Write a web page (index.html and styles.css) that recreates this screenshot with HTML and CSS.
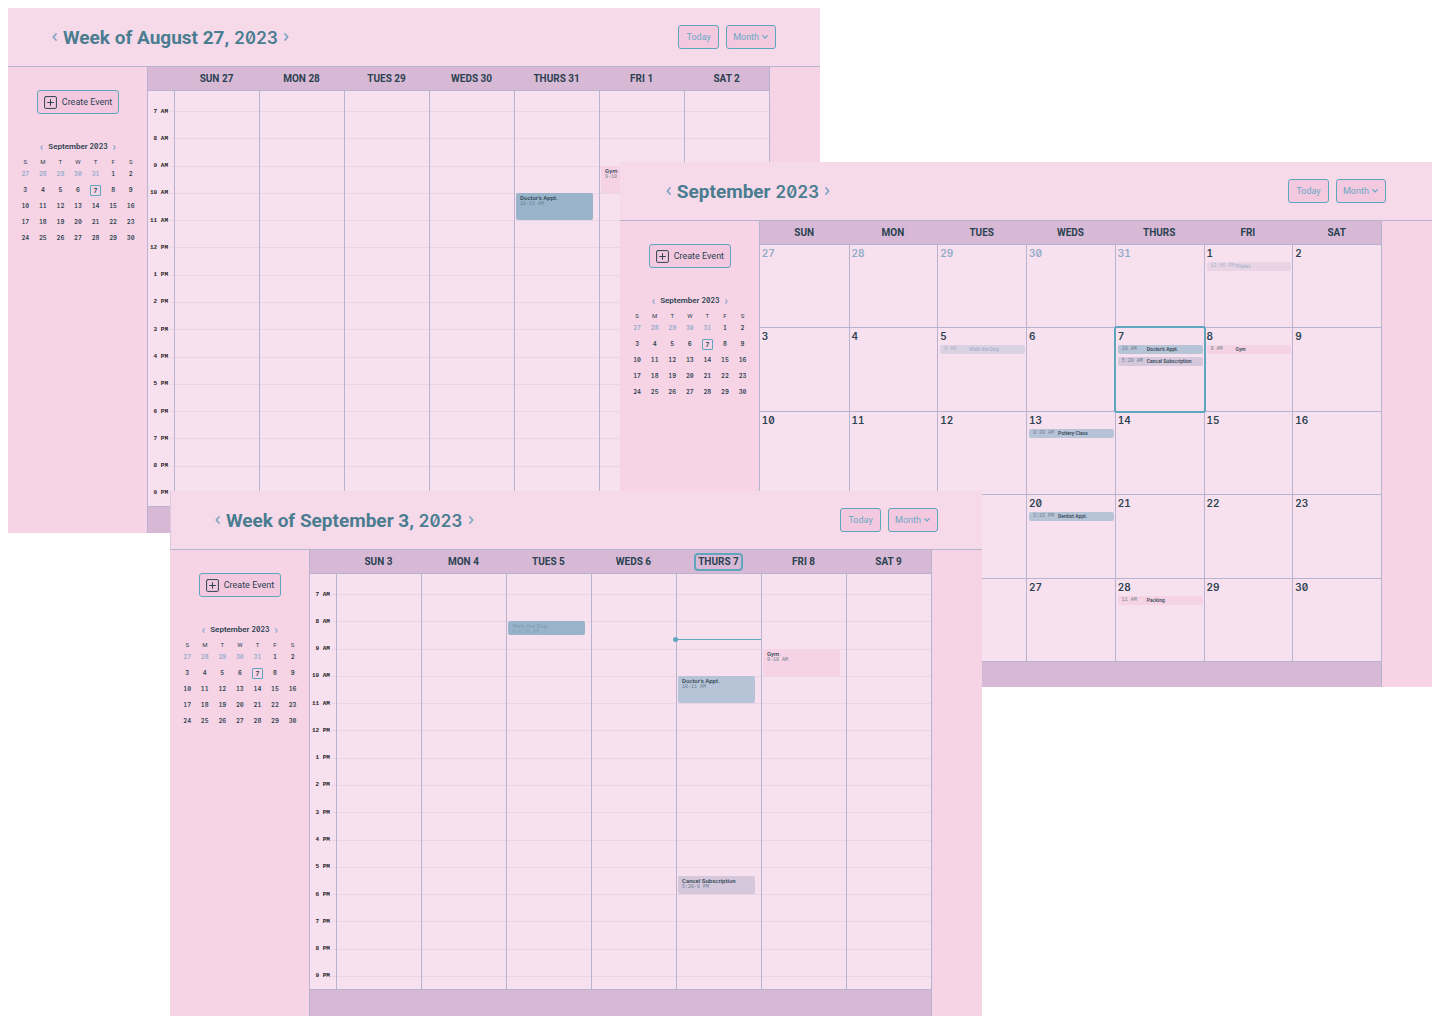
FILE: index.html
```html
<!DOCTYPE html>
<html lang="en">
<head>
<meta charset="utf-8">
<meta name="viewport" content="width=device-width, initial-scale=1">
<title>Calendar</title>
<link rel="stylesheet" href="styles.css">
</head>
<body>
<svg class="defs" aria-hidden="true">
  <symbol id="prev" viewBox="0 0 5 8"><path d="M4 1 L1.3 4 L4 7"/></symbol>
  <symbol id="next" viewBox="0 0 5 8"><path d="M1 1 L3.7 4 L1 7"/></symbol>
  <symbol id="down" viewBox="0 0 6 4"><path d="M0.7 0.7 L3 3 L5.3 0.7"/></symbol>
  <symbol id="plus" viewBox="0 0 13 13"><rect x="0.6" y="0.6" width="11.8" height="11.8" rx="1"/><path d="M6.5 3.6 V9.4 M3.6 6.5 H9.4"/></symbol>
</svg>
<div class="canvas">

<section class="window window-august">
  <header class="topbar">
    <div class="period">
      <button class="nav" aria-label="Previous week"><svg><use href="#prev"/></svg></button>
      <h1>Week of August 27, <span class="num">2023</span></h1>
      <button class="nav" aria-label="Next week"><svg><use href="#next"/></svg></button>
    </div>
    <div class="controls">
      <button class="today-button">Today</button>
      <div class="view"><select aria-label="View"><option>Month</option></select><svg><use href="#down"/></svg></div>
    </div>
  </header>
  <div class="content">
    <aside class="sidebar">
      <button class="create"><svg><use href="#plus"/></svg>Create Event</button>
      <div class="mini-head">
        <button class="nav small" aria-label="Previous month"><svg><use href="#prev"/></svg></button>
        <h2>September <span class="num">2023</span></h2>
        <button class="nav small" aria-label="Next month"><svg><use href="#next"/></svg></button>
      </div>
      <table class="mini">
        <thead><tr><th>S</th><th>M</th><th>T</th><th>W</th><th>T</th><th>F</th><th>S</th></tr></thead>
        <tbody>
          <tr><td class="out">27</td><td class="out">28</td><td class="out">29</td><td class="out">30</td><td class="out">31</td><td>1</td><td>2</td></tr>
          <tr><td>3</td><td>4</td><td>5</td><td>6</td><td><span class="now-day">7</span></td><td>8</td><td>9</td></tr>
          <tr><td>10</td><td>11</td><td>12</td><td>13</td><td>14</td><td>15</td><td>16</td></tr>
          <tr><td>17</td><td>18</td><td>19</td><td>20</td><td>21</td><td>22</td><td>23</td></tr>
          <tr><td>24</td><td>25</td><td>26</td><td>27</td><td>28</td><td>29</td><td>30</td></tr>
        </tbody>
      </table>
    </aside>
    <main class="board week">
      <div class="day-names"><span></span><h3>SUN 27</h3><h3>MON 28</h3><h3>TUES 29</h3><h3>WEDS 30</h3><h3>THURS 31</h3><h3>FRI 1</h3><h3>SAT 2</h3></div>
      <div class="schedule">
        <ol class="hours"><li>7 AM</li><li>8 AM</li><li>9 AM</li><li>10 AM</li><li>11 AM</li><li>12 PM</li><li>1 PM</li><li>2 PM</li><li>3 PM</li><li>4 PM</li><li>5 PM</li><li>6 PM</li><li>7 PM</li><li>8 PM</li><li>9 PM</li></ol>
        <div class="days">
          <div class="day"></div><div class="day"></div><div class="day"></div><div class="day"></div>
          <div class="day"><article class="slot steel" style="grid-row: 19 / span 6"><h4>Doctor's Appt.</h4><p>10-11 AM</p></article></div>
          <div class="day"><article class="slot pink" style="grid-row: 13 / span 6"><h4>Gym</h4><p>9-10 AM</p></article></div>
          <div class="day"></div>
        </div>
      </div>
      <div class="footer-bar"></div>
    </main>
  </div>
</section>

<section class="window window-month">
  <header class="topbar">
    <div class="period">
      <button class="nav" aria-label="Previous month"><svg><use href="#prev"/></svg></button>
      <h1>September <span class="num">2023</span></h1>
      <button class="nav" aria-label="Next month"><svg><use href="#next"/></svg></button>
    </div>
    <div class="controls">
      <button class="today-button">Today</button>
      <div class="view"><select aria-label="View"><option>Month</option></select><svg><use href="#down"/></svg></div>
    </div>
  </header>
  <div class="content">
    <aside class="sidebar">
      <button class="create"><svg><use href="#plus"/></svg>Create Event</button>
      <div class="mini-head">
        <button class="nav small" aria-label="Previous month"><svg><use href="#prev"/></svg></button>
        <h2>September <span class="num">2023</span></h2>
        <button class="nav small" aria-label="Next month"><svg><use href="#next"/></svg></button>
      </div>
      <table class="mini">
        <thead><tr><th>S</th><th>M</th><th>T</th><th>W</th><th>T</th><th>F</th><th>S</th></tr></thead>
        <tbody>
          <tr><td class="out">27</td><td class="out">28</td><td class="out">29</td><td class="out">30</td><td class="out">31</td><td>1</td><td>2</td></tr>
          <tr><td>3</td><td>4</td><td>5</td><td>6</td><td><span class="now-day">7</span></td><td>8</td><td>9</td></tr>
          <tr><td>10</td><td>11</td><td>12</td><td>13</td><td>14</td><td>15</td><td>16</td></tr>
          <tr><td>17</td><td>18</td><td>19</td><td>20</td><td>21</td><td>22</td><td>23</td></tr>
          <tr><td>24</td><td>25</td><td>26</td><td>27</td><td>28</td><td>29</td><td>30</td></tr>
        </tbody>
      </table>
    </aside>
    <main class="board">
      <table class="month">
        <thead><tr><th>SUN</th><th>MON</th><th>TUES</th><th>WEDS</th><th>THURS</th><th>FRI</th><th>SAT</th></tr></thead>
        <tbody>
          <tr>
            <td class="out"><b>27</b></td><td class="out"><b>28</b></td><td class="out"><b>29</b></td><td class="out"><b>30</b></td><td class="out"><b>31</b></td>
            <td><b>1</b><p class="entry mauve past"><time>12:45 PM</time>Pilates</p></td>
            <td><b>2</b></td>
          </tr>
          <tr>
            <td><b>3</b></td><td><b>4</b></td>
            <td><b>5</b><p class="entry grey past"><time>8 AM</time>Walk the Dog</p></td>
            <td><b>6</b></td>
            <td class="current"><b>7</b><p class="entry blue"><time>10 AM</time>Doctor's Appt.</p><p class="entry lilac"><time>5:20 AM</time>Cancel Subscription</p></td>
            <td><b>8</b><p class="entry pink"><time>9 AM</time>Gym</p></td>
            <td><b>9</b></td>
          </tr>
          <tr>
            <td><b>10</b></td><td><b>11</b></td><td><b>12</b></td>
            <td><b>13</b><p class="entry blue"><time>9:30 AM</time>Pottery Class</p></td>
            <td><b>14</b></td><td><b>15</b></td><td><b>16</b></td>
          </tr>
          <tr>
            <td><b>17</b></td><td><b>18</b></td><td><b>19</b></td>
            <td><b>20</b><p class="entry blue"><time>2:15 PM</time>Dentist Appt.</p></td>
            <td><b>21</b></td><td><b>22</b></td><td><b>23</b></td>
          </tr>
          <tr>
            <td><b>24</b></td><td><b>25</b></td><td><b>26</b></td><td><b>27</b></td>
            <td><b>28</b><p class="entry pink"><time>11 AM</time>Packing</p></td>
            <td><b>29</b></td><td><b>30</b></td>
          </tr>
        </tbody>
      </table>
      <div class="footer-bar"></div>
    </main>
  </div>
</section>

<section class="window window-september">
  <header class="topbar">
    <div class="period">
      <button class="nav" aria-label="Previous week"><svg><use href="#prev"/></svg></button>
      <h1>Week of September 3, <span class="num">2023</span></h1>
      <button class="nav" aria-label="Next week"><svg><use href="#next"/></svg></button>
    </div>
    <div class="controls">
      <button class="today-button">Today</button>
      <div class="view"><select aria-label="View"><option>Month</option></select><svg><use href="#down"/></svg></div>
    </div>
  </header>
  <div class="content">
    <aside class="sidebar">
      <button class="create"><svg><use href="#plus"/></svg>Create Event</button>
      <div class="mini-head">
        <button class="nav small" aria-label="Previous month"><svg><use href="#prev"/></svg></button>
        <h2>September <span class="num">2023</span></h2>
        <button class="nav small" aria-label="Next month"><svg><use href="#next"/></svg></button>
      </div>
      <table class="mini">
        <thead><tr><th>S</th><th>M</th><th>T</th><th>W</th><th>T</th><th>F</th><th>S</th></tr></thead>
        <tbody>
          <tr><td class="out">27</td><td class="out">28</td><td class="out">29</td><td class="out">30</td><td class="out">31</td><td>1</td><td>2</td></tr>
          <tr><td>3</td><td>4</td><td>5</td><td>6</td><td><span class="now-day">7</span></td><td>8</td><td>9</td></tr>
          <tr><td>10</td><td>11</td><td>12</td><td>13</td><td>14</td><td>15</td><td>16</td></tr>
          <tr><td>17</td><td>18</td><td>19</td><td>20</td><td>21</td><td>22</td><td>23</td></tr>
          <tr><td>24</td><td>25</td><td>26</td><td>27</td><td>28</td><td>29</td><td>30</td></tr>
        </tbody>
      </table>
    </aside>
    <main class="board week">
      <div class="day-names"><span></span><h3>SUN 3</h3><h3>MON 4</h3><h3>TUES 5</h3><h3>WEDS 6</h3><h3 class="current">THURS 7</h3><h3>FRI 8</h3><h3>SAT 9</h3></div>
      <div class="schedule">
        <ol class="hours"><li>7 AM</li><li>8 AM</li><li>9 AM</li><li>10 AM</li><li>11 AM</li><li>12 PM</li><li>1 PM</li><li>2 PM</li><li>3 PM</li><li>4 PM</li><li>5 PM</li><li>6 PM</li><li>7 PM</li><li>8 PM</li><li>9 PM</li></ol>
        <div class="days">
          <div class="day"></div><div class="day"></div>
          <div class="day"><article class="slot steel past" style="grid-row: 7 / span 3"><h4>Walk the Dog</h4><p>8-8:30 AM</p></article></div>
          <div class="day"></div>
          <div class="day">
            <div class="now-line" style="grid-row: 11"></div>
            <article class="slot blue" style="grid-row: 19 / span 6"><h4>Doctor's Appt.</h4><p>10-11 AM</p></article>
            <article class="slot lilac" style="grid-row: 63 / span 4"><h4>Cancel Subscription</h4><p>5:20-6 PM</p></article>
          </div>
          <div class="day"><article class="slot pink" style="grid-row: 13 / span 6"><h4>Gym</h4><p>9-10 AM</p></article></div>
          <div class="day"></div>
        </div>
      </div>
      <div class="footer-bar"></div>
    </main>
  </div>
</section>

</div>
</body>
</html>
```
FILE: styles.css
```css
:root {
  --line: #b9b3d2;
  --teal: #5fa6bd;
  --title: #4a7d90;
  --ink: #2c4250;
  --muted: #91abca;
  --mono: "Liberation Mono", monospace;
}

* { box-sizing: border-box; }

body {
  margin: 0;
  background: #fff;
  color: var(--ink);
  font-family: Roboto, sans-serif;
}

h1, h2, h3, h4, p, ol { margin: 0; padding: 0; }

button, select {
  margin: 0;
  padding: 0;
  border: 0;
  background: none;
  color: inherit;
  font: inherit;
}

svg {
  fill: none;
  stroke: currentColor;
  stroke-linecap: round;
  stroke-linejoin: round;
}

.defs { position: absolute; width: 0; height: 0; }

.num {
  font-family: Inter, sans-serif;
  font-feature-settings: "tnum", "zero";
}

/* Overlapping windows */
.canvas {
  position: relative;
  min-height: 1024px;
}

.window {
  position: absolute;
  display: flex;
  flex-direction: column;
  width: 56.4%;
  min-height: 525px;
  background: #f6d4e5;
}

.window-august { top: 8px; left: 8px; }
.window-month { top: 162px; right: 8px; }
.window-september { top: 491px; left: 11.8%; }

.topbar {
  display: flex;
  align-items: center;
  justify-content: space-between;
  height: 59px;
  padding: 0 44px;
  border-bottom: 1px solid var(--line);
  background: #f7daea;
}

.window-month .topbar { padding: 0 46px; }
.window-september .topbar { border-left: 1px solid #dcc8e0; }

.period { display: flex; align-items: center; gap: 6px; }

h1 {
  padding-top: 2px;
  color: var(--title);
  font-size: 19px;
  line-height: 24px;
  font-weight: 700;
}

h1 .num { font-size: 17px; font-weight: 600; }

.nav { display: flex; color: #7fa6c6; }
.nav svg { width: 5px; height: 8px; stroke-width: 1.8; }
.nav.small svg { width: 3px; height: 5px; }

.controls { display: flex; gap: 7px; color: #6ba8c4; font-size: 9px; }

.today-button, .view select, .create {
  height: 24px;
  border: 1px solid var(--teal);
  border-radius: 3px;
  background: #f3c9e0;
}

.today-button { width: 41px; }

.view { position: relative; }
.view select { width: 50px; padding-left: 6px; appearance: none; }
.view svg {
  position: absolute;
  top: 10px;
  right: 8px;
  width: 6px;
  height: 4px;
  stroke-width: 1.2;
  pointer-events: none;
}

.content { flex: 1; display: flex; padding-right: 50px; }

/* Sidebar */
.sidebar {
  flex: none;
  display: flex;
  flex-direction: column;
  align-items: center;
  width: 139px;
  padding: 23px 0 0 1px;
}

.create {
  display: flex;
  align-items: center;
  gap: 5px;
  padding: 0 6px;
  font-size: 9px;
}
.create svg { width: 13px; height: 13px; }

.mini-head {
  display: flex;
  align-items: center;
  gap: 5px;
  margin: 28px 0 6px;
}

h2 { font-size: 8px; line-height: 10px; font-weight: 600; }
h2 .num { font-size: 7px; }

.mini {
  width: 123px;
  table-layout: fixed;
  border-collapse: collapse;
  font-size: 6px;
  text-align: center;
}
.mini th { height: 8px; padding: 0; font-weight: 400; line-height: 8px; }
.mini td {
  height: 16px;
  padding: 0;
  font: 600 6px/12px Inter, sans-serif;
  font-feature-settings: "tnum", "zero";
}
.mini .out { color: var(--muted); }
.now-day {
  display: block;
  width: 11px;
  margin: auto;
  border: 1px solid var(--teal);
  border-radius: 1px;
  line-height: 9px;
}

/* Main board */
.board {
  flex: 1;
  display: grid;
  grid-template-rows: 1fr 25px;
  border: solid var(--line);
  border-width: 0 1px;
  background: #f8e1ee;
}
.week { grid-template-rows: 24px 1fr 26px; }

.footer-bar { background: #d7b9d6; }

h3, .month th { font-size: 10px; line-height: 12px; font-weight: 700; }

.day-names {
  display: grid;
  grid-template-columns: 26px repeat(7, 1fr);
  place-items: center;
  border-bottom: 1px solid var(--line);
  background: #d7b9d6;
}
h3.current {
  padding: 1px 2px;
  border: 2px solid var(--teal);
  border-radius: 4px;
}

.schedule { display: grid; border-bottom: 1px solid var(--line); }
.hours, .days { grid-area: 1 / 1; }

.hours {
  display: flex;
  flex-direction: column;
  padding: 20px 0 13px;
  list-style: none;
}
.hours li {
  flex: 1;
  display: grid;
  grid-template-columns: 20px 1fr;
  grid-template-rows: 1px;
  column-gap: 2px;
  align-items: center;
  min-height: 0;
  color: #1c1a22;
  font: 700 6px/8px var(--mono);
  text-align: right;
  white-space: nowrap;
}
.hours li:last-child { flex: none; height: 0; }
.hours li::before { content: ""; grid-area: 1 / 2; height: 1px; background: #ead5e6; }

.days { display: grid; grid-template-columns: repeat(7, 1fr); padding-left: 26px; }
/* One grid row stands for ten minutes, from 7 AM to 9 PM */
.day {
  display: grid;
  grid-template-rows: repeat(84, minmax(0, 1fr));
  padding: 20px 0 13px;
  border-left: 1px solid var(--line);
}

.slot {
  contain: size;
  margin: 0 6px 0 1px;
  padding: 1px 4px;
  border-radius: 2px;
  overflow: hidden;
}
.slot h4 { font-size: 6px; line-height: 7px; font-weight: 500; }
.slot p { color: #6e7f92; font: 5px/6px var(--mono); }
.slot.past h4, .slot.past p { color: #7f9fb6; }

.steel { background: #99b4ca; }
.blue { background: #b7c4d7; }
.lilac { background: #d5c8dd; }
.grey { background: #dad1e2; }
.mauve { background: #e8d4e5; }
.pink { background: #f6d3e4; }

.now-line {
  position: relative;
  height: 1px;
  margin-left: -1px;
  background: var(--teal);
}
.now-line::before {
  content: "";
  position: absolute;
  top: -2px;
  left: -3px;
  width: 5px;
  height: 5px;
  border-radius: 50%;
  background: var(--teal);
}

/* Month table */
.month {
  width: 100%;
  height: 100%;
  table-layout: fixed;
  border-spacing: 0;
}
.month th {
  height: 24px;
  padding: 0;
  border-bottom: 1px solid var(--line);
  background: #d7b9d6;
}
.month td {
  position: relative;
  height: 83px;
  padding: 2px 1px 0 2px;
  border-bottom: 1px solid var(--line);
  vertical-align: top;
}
.month td + td { border-left: 1px solid var(--line); }
.month b {
  display: block;
  margin-bottom: 3px;
  font: 600 10px/12px Inter, sans-serif;
  font-feature-settings: "tnum", "zero";
}
.month .out b { color: var(--muted); }
.month .current::after {
  content: "";
  position: absolute;
  inset: -2px;
  z-index: 1;
  border: 2px solid var(--teal);
  border-radius: 3px;
}

.entry {
  display: flex;
  height: 9px;
  margin-bottom: 3px;
  padding-left: 4px;
  border-radius: 2px;
  font-size: 5px;
  line-height: 9px;
  font-weight: 500;
  white-space: nowrap;
}
.entry time { width: 25px; color: #6e7f92; font-family: var(--mono); font-weight: 400; }
.entry.past, .entry.past time { color: #aab4ca; }
```
